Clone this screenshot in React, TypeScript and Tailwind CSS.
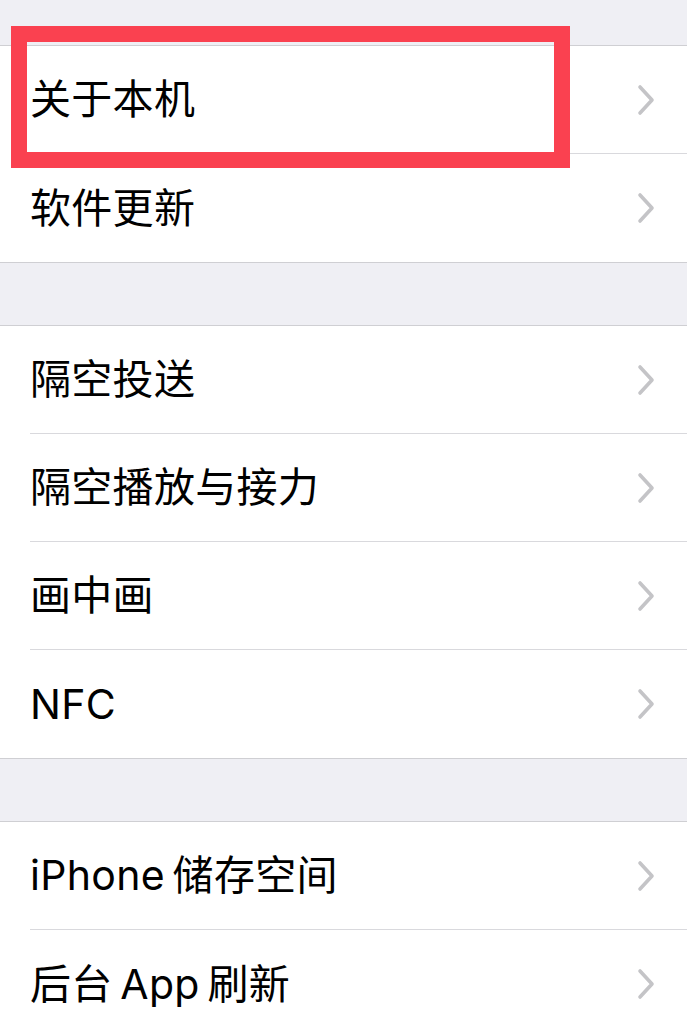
import React from 'react';

const groups: string[][] = [
  ['关于本机', '软件更新'],
  ['隔空投送', '隔空播放与接力', '画中画', 'NFC'],
  ['iPhone\u2009储存空间', '后台\u2009App\u2009刷新'],
];

function Chevron() {
  return (
    <svg width="20" height="32" viewBox="0 0 20 32" fill="none" className="shrink-0">
      <path d="M4 3 L16 16 L4 29" stroke="#c4c4c7" strokeWidth="3.6" strokeLinecap="round" strokeLinejoin="round" />
    </svg>
  );
}

function Row({ label, last }: { label: string; last: boolean }) {
  return (
    <div className="pl-[30px] bg-white">
      <div className={`h-[108px] flex items-center justify-between pr-[31px] ${last ? '' : 'border-b border-[#d9d9dd]'}`}>
        <span className="text-[41px] leading-none text-black tracking-[0.3px]">{label}</span>
        <Chevron />
      </div>
    </div>
  );
}

export default function App() {
  return (
    <div
      className="relative min-h-[1024px] w-[687px] bg-[#efeff4] overflow-hidden"
      style={{ fontFamily: 'Inter, "Noto Sans CJK SC", sans-serif' }}
    >
      <div className="h-[45px]" />
      {groups.map((items, gi) => (
        <div key={gi} className={gi > 0 ? 'mt-[62px]' : ''}>
          <div className="border-y border-[#cfcfd3] bg-white">
            {items.map((label, i) => (
              <Row key={label} label={label} last={i === items.length - 1} />
            ))}
          </div>
        </div>
      ))}
      <div className="absolute left-[11px] top-[26px] w-[559px] h-[142px] border-[16px] border-[#fa4150]" />
    </div>
  );
}
